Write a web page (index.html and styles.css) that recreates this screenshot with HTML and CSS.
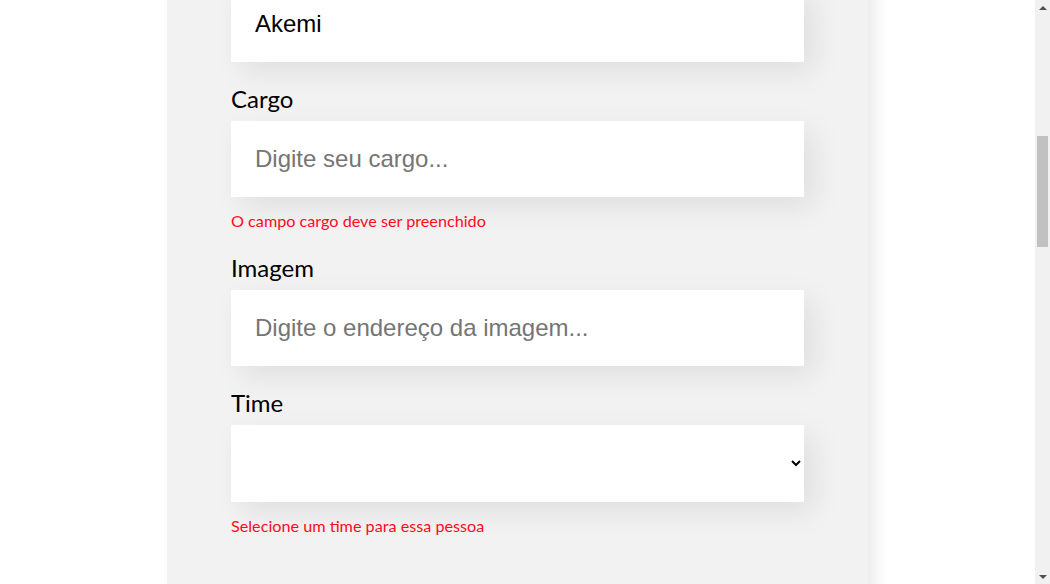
FILE: index.html
```html
<!DOCTYPE html>
<html lang="pt-BR">
<head>
<meta charset="utf-8">
<title>Organo</title>
<link rel="stylesheet" href="styles.css">
</head>
<body>
<div class="page">
  <header class="banner">
    <h1 class="banner-title">Organo</h1>
    <p class="banner-sub">Pessoas e times organizados em um só lugar!</p>
  </header>
  <section class="formulario">
    <form class="form" novalidate>
      <h2 class="form-title">Preencha os dados para criar o card do colaborador.</h2>
      <div class="campo">
        <label class="campo-label" for="nome">Nome</label>
        <input class="campo-input" id="nome" type="text" value="Akemi" placeholder="Digite seu nome...">
      </div>
      <div class="campo">
        <label class="campo-label" for="cargo">Cargo</label>
        <input class="campo-input" id="cargo" type="text" placeholder="Digite seu cargo...">
        <p class="campo-erro">O campo cargo deve ser preenchido</p>
      </div>
      <div class="campo">
        <label class="campo-label" for="imagem">Imagem</label>
        <input class="campo-input" id="imagem" type="text" placeholder="Digite o endereço da imagem...">
      </div>
      <div class="campo">
        <label class="campo-label" for="time">Time</label>
        <select class="campo-select" id="time">
          <option value=""></option>
          <option>Programação</option>
          <option>Front-End</option>
          <option>Data Science</option>
          <option>Devops</option>
          <option>UX e Design</option>
          <option>Mobile</option>
          <option>Inovação e Gestão</option>
        </select>
        <p class="campo-erro">Selecione um time para essa pessoa</p>
      </div>
      <button class="botao" type="button">Criar card</button>
    </form>
  </section>
  <footer class="rodape">Desenvolvido por Alura.</footer>
</div>
<div class="scrollbar" aria-hidden="true">
  <span class="scrollbar-seta scrollbar-seta-cima"></span>
  <span class="scrollbar-trilho"><span class="scrollbar-polegar"></span></span>
  <span class="scrollbar-seta scrollbar-seta-baixo"></span>
</div>
<script src="script.js"></script>
</body>
</html>
```

FILE: styles.css
```css
html,
body {
  margin: 0;
}

body {
  font-family: Lato, "Open Sans", sans-serif;
  color: #000;
  background: #fff;
}

.page {
  min-height: 2914px;
  margin-right: 15px;
  display: flex;
  flex-direction: column;
}

.banner {
  height: 300px;
  background: #6278f7;
  color: #fff;
  display: flex;
  flex-direction: column;
  align-items: center;
  justify-content: center;
}

.banner-title {
  margin: 0;
  font-size: 48px;
}

.banner-sub {
  margin: 8px 0 0;
  font-size: 20px;
}

.formulario {
  display: flex;
  justify-content: center;
  margin: 80px 0;
}

.form {
  width: 573px;
  padding: 36px 64px;
  background: #f2f2f2;
  border-radius: 20px;
  box-shadow: 8px 8px 16px rgba(0, 0, 0, 0.08);
}

.form-title {
  margin: 0;
  font-size: 20px;
  line-height: 40px;
  font-weight: 400;
}

.campo {
  margin: 24px 0;
}

.campo-label {
  display: block;
  font-size: 24px;
  line-height: 25px;
  margin-bottom: 10px;
}

.campo-input,
.campo-select {
  display: block;
  width: 100%;
  box-sizing: border-box;
  font-family: "Liberation Sans", Arial, sans-serif;
  font-size: 24px;
  padding: 24px;
  border: none;
  background: #fff;
  color: #000;
  box-shadow: 10px 10px 30px rgba(0, 0, 0, 0.08);
  outline: none;
}

.campo-input::placeholder {
  color: #757575;
}

.campo-erro {
  margin: 13px 0 0;
  font-size: 16.2px;
  line-height: 21px;
  color: #ff0a1f;
}

.botao {
  margin-top: 56px;
  font-family: inherit;
  font-size: 18px;
  font-weight: 700;
  padding: 28px 32px;
  border: none;
  border-radius: 10px;
  background: #6278f7;
  color: #fff;
}

.rodape {
  margin-top: auto;
  height: 120px;
  display: flex;
  align-items: center;
  justify-content: center;
  background: #6278f7;
  color: #fff;
}

/* classic scrollbar drawn over the right edge of the window */
.scrollbar {
  position: fixed;
  top: 0;
  right: 0;
  bottom: 0;
  width: 15px;
  background: #f1f1f1;
  display: flex;
  flex-direction: column;
}

.scrollbar-seta {
  height: 15px;
  flex: none;
  display: flex;
  align-items: center;
  justify-content: center;
}

.scrollbar-seta::before {
  content: "";
  width: 0;
  height: 0;
  border-left: 4px solid transparent;
  border-right: 4px solid transparent;
}

.scrollbar-seta-cima::before {
  border-bottom: 4px solid #505050;
}

.scrollbar-seta-baixo::before {
  border-top: 4px solid #505050;
}

.scrollbar-trilho {
  flex: 1;
  padding: 121px 2px 0;
}

.scrollbar-polegar {
  display: block;
  height: 111px;
  background: #c1c1c1;
}
```

FILE: script.js
```js
var nome = document.getElementById('nome');
var topo = nome.getBoundingClientRect().top + window.scrollY;
window.scrollTo(0, topo + 14);
window.addEventListener('load', function () {
  window.scrollTo(0, topo + 14);
});
```
